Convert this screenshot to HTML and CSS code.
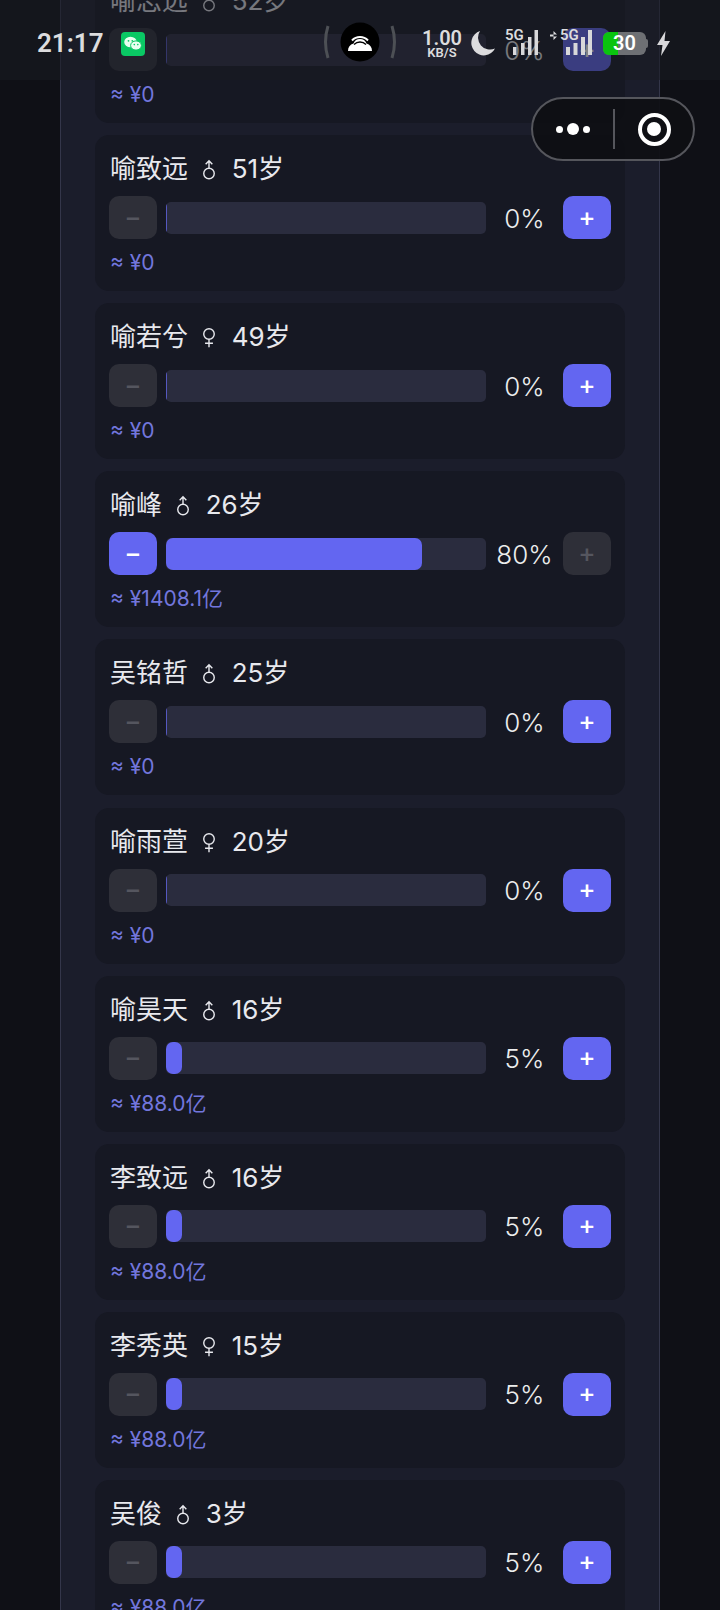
FILE: index.html
```html
<!DOCTYPE html>
<html>
<head>
  <meta charset="utf-8">
  <title>股权分配</title>
  <link rel="stylesheet" href="styles.css">
</head>
<body>
  <svg class="defs" width="0" height="0">
    <symbol id="male" viewBox="0 0 16 24">
      <circle cx="8" cy="16.5" r="6" fill="none" stroke="currentColor" stroke-width="1.6"/>
      <path d="M8 10.5V2M4.2 6L8 2l3.800 4" fill="none" stroke="currentColor" stroke-width="1.6"/>
    </symbol>
    <symbol id="female" viewBox="0 0 16 24">
      <circle cx="8" cy="8" r="6" fill="none" stroke="currentColor" stroke-width="1.6"/>
      <path d="M8 14v9M3.500 18.500h9" fill="none" stroke="currentColor" stroke-width="1.6"/>
    </symbol>
  </svg>

  <!-- Status bar and capsule sit over the scrolled list -->
  <div class="statusbar">
    <span class="clock">21:17</span>
    <svg class="wechat" viewBox="0 0 24 24">
      <rect width="24" height="24" rx="4" fill="#0ac864"/>
      <ellipse cx="9.500" cy="10" rx="6.300" ry="5.300" fill="#e8fff0"/>
      <ellipse cx="15" cy="13.500" rx="5.400" ry="4.600" fill="#e8fff0" stroke="#0ac864" stroke-width="1"/>
      <circle cx="7.500" cy="8.800" r=".9" fill="#0ac864"/>
      <circle cx="11.300" cy="8.800" r=".9" fill="#0ac864"/>
      <circle cx="13.300" cy="12.600" r=".8" fill="#0ac864"/>
      <circle cx="16.800" cy="12.600" r=".8" fill="#0ac864"/>
    </svg>
    <div class="island">
      <svg class="paren" viewBox="0 0 8 38"><path d="M6 3Q1 19 6 35" fill="none" stroke="#4d5055" stroke-width="3"/></svg>
      <svg class="hotspot" viewBox="0 0 40 40">
        <circle cx="20" cy="20" r="19.500" fill="#000"/>
        <path d="M8 29c0-4 2-6.500 5.500-7.500a7 7 0 0 1 13 0C30 22.500 32 25 32 29z" fill="#fff"/>
        <path d="M12 18.500a11 11 0 0 1 16 0" fill="none" stroke="#fff" stroke-width="2"/>
        <path d="M15.500 22a6.500 6.500 0 0 1 9 0" fill="none" stroke="#fff" stroke-width="2"/>
        <path d="M14 22.500a8.500 8.500 0 0 1 12 0" fill="none" stroke="#000" stroke-width="1.400"/>
      </svg>
      <svg class="paren" viewBox="0 0 8 38"><path d="M2 3Q7 19 2 35" fill="none" stroke="#4d5055" stroke-width="3"/></svg>
    </div>
    <div class="netspeed"><b>1.00</b><small>KB/S</small></div>
    <svg class="moon" viewBox="0 0 26 26"><path d="M10 1a12.500 12.500 0 1 0 15 17.500A12 12 0 0 1 10 1z" fill="#dcdcde"/></svg>
    <div class="signal">
      <small>5G</small>
      <svg viewBox="0 0 25 25"><path d="M0 17h3.500v8H0zM8 13h3.500v12H8zM15 7h3.500v18H15zM21.500 0H25v25h-3.500z" fill="#d8d8da"/></svg>
    </div>
    <div class="signal signal-two">
      <small><i class="updown"></i>5G</small>
      <svg viewBox="0 0 26 25"><path d="M0 17h4v8H0zM7.500 13h4v12h-4zM15 7h4v18h-4zM22 0h4v25h-4z" fill="#d8d8da"/></svg>
    </div>
    <div class="battery"><span class="battery-level"></span><span class="battery-text">30</span></div>
    <svg class="bolt" viewBox="0 0 13 25"><path d="M8.500 0L0 14h5.500L4 25l9-15H7.500z" fill="#d8d8da"/></svg>
  </div>

  <div class="capsule">
    <div class="capsule-more"><i></i><i class="big"></i><i></i></div>
    <span class="capsule-line"></span>
    <div class="capsule-close"><i></i></div>
  </div>

  <div class="page">
    <div class="panel">
      <div class="card">
        <div class="person">喻志远 <svg class="sex"><use href="#male"/></svg> 52岁</div>
        <div class="row">
          <span class="btn off">−</span>
          <div class="track"><div class="fill empty"></div></div>
          <span class="pct">0%</span>
          <span class="btn">+</span>
        </div>
        <div class="amount">≈ ¥0</div>
      </div>
      <div class="card">
        <div class="person">喻致远 <svg class="sex"><use href="#male"/></svg> 51岁</div>
        <div class="row">
          <span class="btn off">−</span>
          <div class="track"><div class="fill empty"></div></div>
          <span class="pct">0%</span>
          <span class="btn">+</span>
        </div>
        <div class="amount">≈ ¥0</div>
      </div>
      <div class="card">
        <div class="person">喻若兮 <svg class="sex"><use href="#female"/></svg> 49岁</div>
        <div class="row">
          <span class="btn off">−</span>
          <div class="track"><div class="fill empty"></div></div>
          <span class="pct">0%</span>
          <span class="btn">+</span>
        </div>
        <div class="amount">≈ ¥0</div>
      </div>
      <div class="card">
        <div class="person">喻峰 <svg class="sex"><use href="#male"/></svg> 26岁</div>
        <div class="row">
          <span class="btn">−</span>
          <div class="track"><div class="fill" style="width:80%"></div></div>
          <span class="pct">80%</span>
          <span class="btn off">+</span>
        </div>
        <div class="amount">≈ ¥1408.1亿</div>
      </div>
      <div class="card">
        <div class="person">吴铭哲 <svg class="sex"><use href="#male"/></svg> 25岁</div>
        <div class="row">
          <span class="btn off">−</span>
          <div class="track"><div class="fill empty"></div></div>
          <span class="pct">0%</span>
          <span class="btn">+</span>
        </div>
        <div class="amount">≈ ¥0</div>
      </div>
      <div class="card">
        <div class="person">喻雨萱 <svg class="sex"><use href="#female"/></svg> 20岁</div>
        <div class="row">
          <span class="btn off">−</span>
          <div class="track"><div class="fill empty"></div></div>
          <span class="pct">0%</span>
          <span class="btn">+</span>
        </div>
        <div class="amount">≈ ¥0</div>
      </div>
      <div class="card">
        <div class="person">喻昊天 <svg class="sex"><use href="#male"/></svg> 16岁</div>
        <div class="row">
          <span class="btn off">−</span>
          <div class="track"><div class="fill" style="width:5%"></div></div>
          <span class="pct">5%</span>
          <span class="btn">+</span>
        </div>
        <div class="amount">≈ ¥88.0亿</div>
      </div>
      <div class="card">
        <div class="person">李致远 <svg class="sex"><use href="#male"/></svg> 16岁</div>
        <div class="row">
          <span class="btn off">−</span>
          <div class="track"><div class="fill" style="width:5%"></div></div>
          <span class="pct">5%</span>
          <span class="btn">+</span>
        </div>
        <div class="amount">≈ ¥88.0亿</div>
      </div>
      <div class="card">
        <div class="person">李秀英 <svg class="sex"><use href="#female"/></svg> 15岁</div>
        <div class="row">
          <span class="btn off">−</span>
          <div class="track"><div class="fill" style="width:5%"></div></div>
          <span class="pct">5%</span>
          <span class="btn">+</span>
        </div>
        <div class="amount">≈ ¥88.0亿</div>
      </div>
      <div class="card">
        <div class="person">吴俊 <svg class="sex"><use href="#male"/></svg> 3岁</div>
        <div class="row">
          <span class="btn off">−</span>
          <div class="track"><div class="fill" style="width:5%"></div></div>
          <span class="pct">5%</span>
          <span class="btn">+</span>
        </div>
        <div class="amount">≈ ¥88.0亿</div>
      </div>
    </div>
  </div>
</body>
</html>
```

FILE: styles.css
```css
html, body {
  margin: 0;
  height: 100%;
  overflow: hidden;
  background: #0f1016;
  font-family: Inter, "Noto Sans CJK SC", sans-serif;
}
.defs {
  position: absolute;
}
/* List, scrolled so the first card is cut by the top edge */
.page {
  height: 1610px;
  overflow: hidden;
  padding: 0 60px;
}
.panel {
  margin-top: -33px;
  padding: 0 34px;
  background: #1b1d2b;
  border-left: 1px solid #34364a;
  border-right: 1px solid #34364a;
}
.card {
  height: 156px;
  margin-bottom: 12.12px;
  padding: 16px 14px 0;
  box-sizing: border-box;
  background: #161823;
  border-radius: 14px;
}
.person {
  height: 36px;
  margin-bottom: 9px;
  padding-left: 1px;
  font-size: 26px;
  line-height: 36px;
  color: #e8e9ee;
  white-space: pre;
}
.sex {
  width: 14px;
  height: 21px;
  margin: 0 8px 0 7px;
  vertical-align: -2px;
  color: #e8e9ee;
}
/* Slider row */
.row {
  display: flex;
  align-items: center;
  gap: 8px;
}
.btn {
  width: 48px;
  height: 43px;
  flex: none;
  box-sizing: border-box;
  padding-bottom: 3px;
  display: flex;
  align-items: center;
  justify-content: center;
  background: #6366f1;
  border-radius: 10px;
  color: #fff;
  font-size: 26px;
  font-weight: 500;
}
.btn.off {
  background: #2e2f38;
  color: #55565f;
}
.track {
  flex: 1;
  height: 32px;
  margin-left: 1px;
  background: #2a2c3e;
  border-radius: 5px;
  overflow: hidden;
}
.fill {
  height: 100%;
  background: #6366f1;
  border-radius: 7px;
}
.fill.empty {
  width: 1px;
  background: #5558c0;
  border-radius: 0;
}
.pct {
  width: 61px;
  flex: none;
  padding-top: 1px;
  text-align: center;
  font-size: 26px;
  font-weight: 300;
  color: #eceded;
}
.amount {
  margin-top: 11px;
  padding-left: 1px;
  font-size: 21px;
  line-height: 26px;
  color: #7276dc;
}
/* Phone status bar */
.statusbar {
  position: absolute;
  top: 0;
  left: 0;
  width: 720px;
  height: 80px;
  box-sizing: border-box;
  padding: 6px 0 0 37px;
  display: flex;
  align-items: center;
  background: rgba(26, 27, 34, 0.55);
  color: #dcdcde;
  z-index: 2;
}
.clock {
  width: 84px;
  font-size: 26px;
  font-weight: 600;
  font-family: Roboto, sans-serif;
}
.wechat {
  width: 24px;
  height: 24px;
  margin-top: 2px;
}
.island {
  display: flex;
  align-items: center;
  gap: 8px;
  margin-left: 177px;
  margin-top: -2px;
}
.paren {
  width: 8px;
  height: 38px;
}
.hotspot {
  width: 40px;
  height: 40px;
  margin: 0 2px;
}
.netspeed {
  width: 38px;
  margin-left: 25px;
  display: flex;
  flex-direction: column;
  align-items: center;
  font-family: Roboto, sans-serif;
  line-height: 1;
}
.netspeed b {
  font-size: 20px;
  font-weight: 600;
}
.netspeed small {
  margin-top: -2px;
  font-size: 13px;
  font-weight: 600;
}
.moon {
  width: 26px;
  height: 26px;
  margin-left: 9px;
}
.signal {
  position: relative;
  width: 33px;
  height: 26px;
  margin-left: 9px;
}
.signal small {
  position: absolute;
  top: 0;
  left: 0;
  display: flex;
  align-items: center;
  font-size: 15px;
  line-height: 11px;
  font-weight: 600;
  font-family: Roboto, sans-serif;
}
.signal svg {
  position: absolute;
  top: 0;
  right: 0;
  width: 25px;
  height: 25px;
}
.signal-two {
  width: 42px;
  margin-left: 12px;
}
.signal-two svg {
  width: 26px;
}
.updown {
  width: 7px;
  height: 9px;
  margin-right: 3px;
  background: #dcdcde;
  clip-path: polygon(50% 0, 100% 40%, 0 40%, 0 60%, 100% 60%, 50% 100%);
}
.battery {
  position: relative;
  width: 43px;
  height: 23px;
  margin-left: 11px;
  background: #6e7074;
  border-radius: 6px;
}
.battery::after {
  content: "";
  position: absolute;
  top: 7px;
  right: -2px;
  width: 2px;
  height: 9px;
  background: #6e7074;
  border-radius: 0 2px 2px 0;
}
.battery-level {
  position: absolute;
  top: 0;
  left: 0;
  width: 15px;
  height: 100%;
  background: #0ac40f;
  border-radius: 6px 0 0 6px;
}
.battery-text {
  position: absolute;
  left: 0;
  right: 0;
  text-align: center;
  font-size: 20px;
  line-height: 23px;
  font-weight: 600;
  font-family: Roboto, sans-serif;
  color: #fff;
}
.bolt {
  width: 13px;
  height: 25px;
  margin-left: 11px;
}
/* Mini program capsule */
.capsule {
  position: absolute;
  top: 97px;
  left: 531px;
  width: 164px;
  height: 64px;
  box-sizing: border-box;
  display: flex;
  align-items: center;
  background: rgba(14, 15, 20, 0.92);
  border: 2px solid #55565c;
  border-radius: 32px;
  z-index: 3;
}
.capsule-more {
  width: 80px;
  display: flex;
  justify-content: center;
  align-items: center;
  gap: 4px;
}
.capsule-more i {
  width: 7px;
  height: 7px;
  background: #fff;
  border-radius: 50%;
}
.capsule-more i.big {
  width: 12px;
  height: 12px;
}
.capsule-line {
  width: 2px;
  height: 40px;
  background: #55565c;
}
.capsule-close {
  flex: 1;
  display: flex;
  justify-content: center;
}
.capsule-close i {
  width: 33px;
  height: 33px;
  box-sizing: border-box;
  border: 4px solid #fff;
  border-radius: 50%;
  display: flex;
  align-items: center;
  justify-content: center;
}
.capsule-close i::after {
  content: "";
  width: 14px;
  height: 14px;
  background: #fff;
  border-radius: 50%;
}
```
